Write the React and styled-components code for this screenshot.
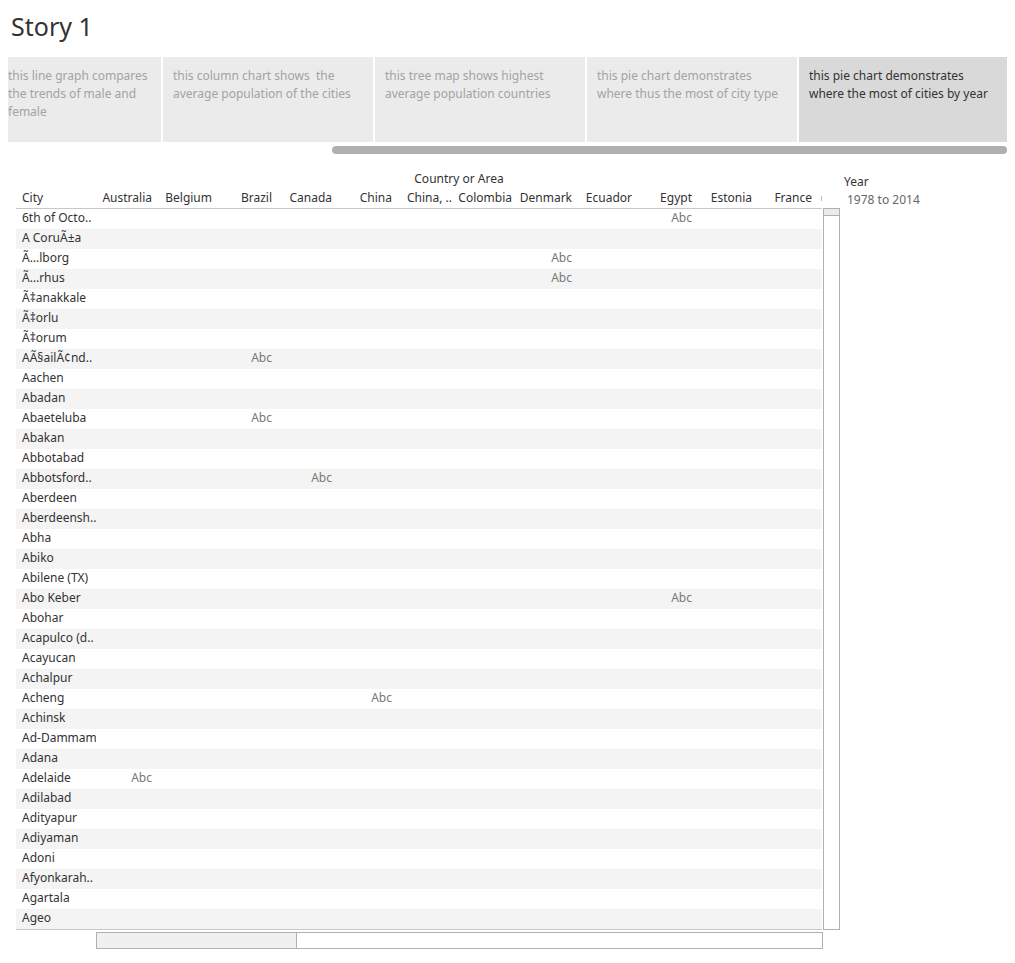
import React from 'react';
import styled, { createGlobalStyle } from 'styled-components';

const GlobalStyle = createGlobalStyle`
  body {
    margin: 0;
    background: #fff;
    font-family: "Noto Sans", "Open Sans", sans-serif;
    color: #333;
  }
`;

const Page = styled.div`
  width: 1015px;
  height: 963px;
  overflow: hidden;
`;

const Title = styled.h1`
  margin: 0;
  padding: 10px 0 0 11px;
  height: 47px;
  line-height: 32px;
  font-size: 25px;
  font-weight: 400;
  color: #333;
`;

const StoryNav = styled.div`
  display: flex;
  gap: 2px;
  margin-left: 8px;
  height: 85px;
`;

const StoryPoint = styled.div`
  box-sizing: border-box;
  width: ${p => p.$width}px;
  padding: 10px 10px 0 ${p => p.$padLeft}px;
  background: ${p => (p.$active ? '#d9d9d9' : '#ebebeb')};
  color: ${p => (p.$active ? '#333' : '#a3a3a3')};
  font-size: 12px;
  line-height: 18px;
  white-space: pre-wrap;
`;

const NavScroll = styled.div`
  margin: 4px 0 0 332px;
  width: 675px;
  height: 8px;
  border-radius: 4px;
  background: #b0b0b0;
`;

const Main = styled.div`
  display: flex;
  margin-top: 15px;
  padding-left: 16px;
`;

const TableArea = styled.div`
  width: 824px;
  font-size: 12px;
`;

const AxisLabel = styled.div`
  box-sizing: border-box;
  width: 806px;
  height: 20px;
  line-height: 20px;
  padding-left: 80px;
  text-align: center;
  color: #333;
`;

const Grid = styled.div`
  display: grid;
  grid-template-columns: 80px repeat(12, 60px) 6px;
  width: 806px;
`;

const HeaderRow = styled(Grid)`
  height: 19px;
  line-height: 17px;
  border-bottom: 1px solid #c8c8c8;
`;

const HeadCell = styled.div`
  padding: ${p => (p.$first ? '0 0 0 6px' : '0 4px 0 0')};
  text-align: ${p => (p.$first ? 'left' : 'right')};
  white-space: nowrap;
  overflow: hidden;
  color: #333;
`;

const Tick = styled.div`
  display: flex;
  justify-content: flex-end;
  align-items: center;
  &::after {
    content: '';
    width: 1px;
    height: 5px;
    background: #bbb;
  }
`;

const BodyWrap = styled.div`
  display: flex;
  align-items: flex-start;
`;

const Rows = styled.div`
  width: 806px;
  border-bottom: 1px solid #c8c8c8;
`;

const Row = styled(Grid)`
  height: 20px;
  line-height: 18px;
  background: ${p => (p.$striped ? '#f4f4f4' : '#fff')};
`;

const CityCell = styled.div`
  padding-left: 6px;
  white-space: nowrap;
  overflow: hidden;
  color: #333;
`;

const MarkCell = styled.div`
  padding-right: 4px;
  text-align: right;
  color: #777;
`;

const VScroll = styled.div`
  box-sizing: border-box;
  width: 17px;
  height: 722px;
  margin: -1px 0 0 1px;
  border: 1px solid #b0b0b0;
`;

const VThumb = styled.div`
  height: 6px;
  background: #ebebeb;
  border-bottom: 1px solid #b0b0b0;
`;

const HScroll = styled.div`
  box-sizing: border-box;
  display: flex;
  width: 727px;
  height: 17px;
  margin: 2px 0 0 80px;
  border: 1px solid #b0b0b0;
`;

const HThumb = styled.div`
  width: 199px;
  background: #f0f0f0;
  border-right: 1px solid #b0b0b0;
`;

const Filter = styled.div`
  margin: 5px 0 0 4px;
  font-size: 12px;
`;

const FilterTitle = styled.div`
  line-height: 16px;
  color: #333;
`;

const FilterValue = styled.div`
  padding-left: 3px;
  line-height: 20px;
  color: #666;
`;

const storyPoints = [
  { text: 'this line graph compares\nthe trends of male and\nfemale', width: 153, pad: 0 },
  { text: 'this column chart shows  the\naverage population of the cities', width: 210, pad: 10 },
  { text: 'this tree map shows highest\naverage population countries', width: 210, pad: 10 },
  { text: 'this pie chart demonstrates\nwhere thus the most of city type', width: 210, pad: 10 },
  { text: 'this pie chart demonstrates\nwhere the most of cities by year', width: 208, pad: 10, active: true },
];

const countries = [
  'Australia', 'Belgium', 'Brazil', 'Canada', 'China', 'China, ..',
  'Colombia', 'Denmark', 'Ecuador', 'Egypt', 'Estonia', 'France',
];

const cities = [
  ['6th of Octo..', 'Egypt'],
  ['A CoruÃ±a'],
  ['Ã…lborg', 'Denmark'],
  ['Ã…rhus', 'Denmark'],
  ['Ã‡anakkale'],
  ['Ã‡orlu'],
  ['Ã‡orum'],
  ['AÃ§ailÃ¢nd..', 'Brazil'],
  ['Aachen'],
  ['Abadan'],
  ['Abaeteluba', 'Brazil'],
  ['Abakan'],
  ['Abbotabad'],
  ['Abbotsford..', 'Canada'],
  ['Aberdeen'],
  ['Aberdeensh..'],
  ['Abha'],
  ['Abiko'],
  ['Abilene (TX)'],
  ['Abo Keber', 'Egypt'],
  ['Abohar'],
  ['Acapulco (d..'],
  ['Acayucan'],
  ['Achalpur'],
  ['Acheng', 'China'],
  ['Achinsk'],
  ['Ad-Dammam'],
  ['Adana'],
  ['Adelaide', 'Australia'],
  ['Adilabad'],
  ['Adityapur'],
  ['Adiyaman'],
  ['Adoni'],
  ['Afyonkarah..'],
  ['Agartala'],
  ['Ageo'],
];

export default function App() {
  return (
    <Page>
      <GlobalStyle />
      <Title>Story 1</Title>
      <StoryNav>
        {storyPoints.map((s, i) => (
          <StoryPoint key={i} $width={s.width} $padLeft={s.pad} $active={s.active}>
            {s.text}
          </StoryPoint>
        ))}
      </StoryNav>
      <NavScroll />
      <Main>
        <TableArea>
          <AxisLabel>Country or Area</AxisLabel>
          <HeaderRow>
            <HeadCell $first>City</HeadCell>
            {countries.map(c => (
              <HeadCell key={c}>{c}</HeadCell>
            ))}
            <Tick />
          </HeaderRow>
          <BodyWrap>
            <Rows>
              {cities.map(([name, country], i) => (
                <Row key={name} $striped={i % 2 === 1}>
                  <CityCell>{name}</CityCell>
                  {countries.map(c => (
                    <MarkCell key={c}>{c === country ? 'Abc' : ''}</MarkCell>
                  ))}
                  <div />
                </Row>
              ))}
            </Rows>
            <VScroll>
              <VThumb />
            </VScroll>
          </BodyWrap>
          <HScroll>
            <HThumb />
          </HScroll>
        </TableArea>
        <Filter>
          <FilterTitle>Year</FilterTitle>
          <FilterValue>1978 to 2014</FilterValue>
        </Filter>
      </Main>
    </Page>
  );
}
